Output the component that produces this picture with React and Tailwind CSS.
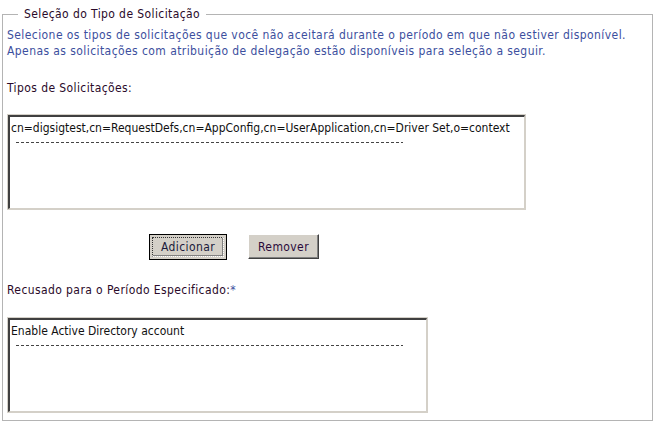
export default function App() {
  const font = { fontFamily: '"DejaVu Sans Condensed", "DejaVu Sans", sans-serif' };
  return (
    <div className="w-[654px] h-[422px] bg-white relative" style={font}>
      <fieldset className="absolute left-[2px] top-[7px] w-[651px] h-[414px] border border-[#b4b4b4] px-[4px] text-[12px]">
        <legend className="ml-[11px] px-[6px] text-[12px] leading-[14px] text-[#2a0a2a] tracking-[0.4px]">Seleção do Tipo de Solicitação</legend>
        <div className="text-[#3c4f9e] leading-[16px] mt-[6px] tracking-[0.42px]">
          <p>Selecione os tipos de solicitações que você não aceitará durante o período em que não estiver disponível.</p>
          <p>Apenas as solicitações com atribuição de delegação estão disponíveis para seleção a seguir.</p>
        </div>
        <p className="mt-[21px] leading-[16px] text-[#2a0a2a] tracking-[0.4px]">Tipos de Solicitações:</p>
        <ListBox width="w-[519px]" className="mt-[18px]" first="cn=digsigtest,cn=RequestDefs,cn=AppConfig,cn=UserApplication,cn=Driver Set,o=context" />
        <div className="flex mt-[24px] pl-[142px] gap-[21px]">
          <button className="w-[78px] h-[26px] bg-[#d4d0c8] border border-black text-[12px] text-[#1a1a3a] p-[2px] tracking-[0.4px]">
            <span className="flex h-full w-full items-center justify-center border border-dotted border-[#333] border-r-[#fff] border-b-[#fff] shadow-[inset_-1px_-1px_0_#808080]">Adicionar</span>
          </button>
          <button className="w-[71px] h-[25px] bg-[#d4d0c8] border border-t-white border-l-white border-r-[#404040] border-b-[#404040] shadow-[inset_-1px_-1px_0_#808080] text-[12px] text-[#2a0a3a] tracking-[0.4px]">
            Remover
          </button>
        </div>
        <p className="mt-[22px] leading-[16px] text-[#2a0a2a] tracking-[0.4px]">
          Recusado para o Período Especificado:<span className="text-[#3c4f9e]">*</span>
        </p>
        <ListBox width="w-[421px]" className="mt-[19px]" first="Enable Active Directory account" />
      </fieldset>
    </div>
  );
}

function ListBox({ width, className, first }) {
  return (
    <div className={`${width} h-[96px] border border-[#d4d0c8] ${className}`}>
      <div className="h-full w-full border-t-2 border-l-2 border-t-[#404040] border-l-[#404040] border-r border-b border-r-[#d4d0c8] border-b-[#d4d0c8] bg-white pl-[1px] pt-[3px]">
        <div className="text-[12px] leading-[16px] text-[#111] whitespace-nowrap">{first}</div>
        <div className="ml-[5px] mt-[6px] h-[1px] w-[387px] bg-[repeating-linear-gradient(90deg,#444_0_3px,transparent_3px_5px)]" />
      </div>
    </div>
  );
}
